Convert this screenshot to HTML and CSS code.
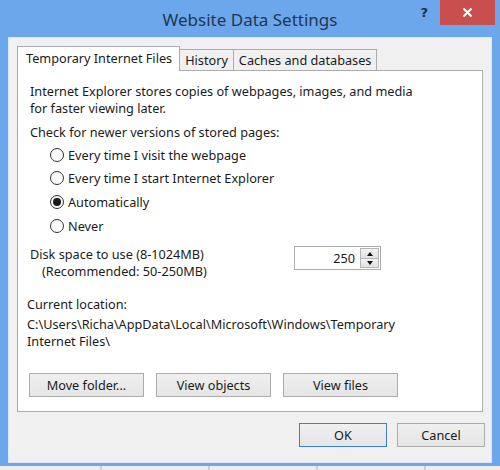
FILE: index.html
```html
<!DOCTYPE html>
<html>
  <head>
    <title>Website Data Settings</title>
    <meta http-equiv="Content-Type" content="text/html; charset=UTF-8">
    <link rel="stylesheet" href="styles.css">
  </head>

  <body>
    <div class="window">
      <div class="titleBar">
        <span></span>
        <span class="caption">Website Data Settings</span>
        <div class="captionButtons">
          <span class="helpBtn">?</span>
          <span class="closeBtn">
            <svg width="11" height="11" viewBox="0 0 11 11">
              <path d="M1.5 1.5 L9.5 9.5 M9.5 1.5 L1.5 9.5" stroke="#fff" stroke-width="2" fill="none"/>
            </svg>
          </span>
        </div>
      </div>

      <div class="client">
        <div class="tabStrip">
          <div class="tab selected">Temporary Internet Files</div>
          <div class="tab">History</div>
          <div class="tab">Caches and databases</div>
        </div>

        <div class="tabPage">
          <div class="indent intro">
            Internet Explorer stores copies of webpages, images, and media<br>
            for faster viewing later.
          </div>
          <div class="indent checkLabel">Check for newer versions of stored pages:</div>

          <div class="radioGroup">
            <div class="radioRow"><span class="radio"></span>Every time I visit the webpage</div>
            <div class="radioRow"><span class="radio"></span>Every time I start Internet Explorer</div>
            <div class="radioRow"><span class="radio checked"></span>Automatically</div>
            <div class="radioRow"><span class="radio"></span>Never</div>
          </div>

          <div class="diskRow">
            <div class="indent diskLabel">
              Disk space to use (8-1024MB)<br>
              <span class="recommended">(Recommended: 50-250MB)</span>
            </div>
            <div class="spinBox">
              <span class="spinValue">250</span>
              <span class="spinButtons">
                <span class="spinBtn"><span class="arrowUp"></span></span>
                <span class="spinBtn"><span class="arrowDown"></span></span>
              </span>
            </div>
          </div>

          <div class="locLabel">Current location:</div>
          <div class="locPath">
            C:\Users\Richa\AppData\Local\Microsoft\Windows\Temporary<br>
            Internet Files\
          </div>

          <div class="pageButtons">
            <span class="button">Move folder...</span>
            <span class="button">View objects</span>
            <span class="button">View files</span>
          </div>
        </div>

        <div class="dialogButtons">
          <span class="button dlg default">OK</span>
          <span class="button dlg">Cancel</span>
        </div>
      </div>

      <div class="taskStrip">
        <span class="seg"></span>
        <span class="seg"></span>
        <span class="seg"></span>
        <span class="seg"></span>
      </div>
    </div>
  </body>
</html>
```

FILE: styles.css
```css
body {
  margin: 0;
  font-family: "Noto Sans", "Open Sans", sans-serif;
  font-size: 12.7px;
  color: #1b1b1b;
}
.window {
  width: 500px;
  height: 470px;
  background-color: #6ca7ec;
  display: flex;
  flex-direction: column;
  overflow: hidden;
}

/* title bar */
.titleBar {
  height: 37px;
  display: grid;
  grid-template-columns: 1fr auto 1fr;
}
.caption {
  font-size: 17px;
  color: #1f3654;
  line-height: 37px;
  padding-top: 1px;
}
.captionButtons {
  display: flex;
  justify-content: flex-end;
  align-items: flex-start;
}
.helpBtn {
  font-family: "DejaVu Sans", sans-serif;
  font-weight: bold;
  font-size: 13px;
  color: #1b2e4a;
  margin-top: 5px;
  margin-right: 12px;
}
.closeBtn {
  width: 55px;
  height: 25px;
  margin-right: 5px;
  background-color: #c84f4e;
  display: flex;
  align-items: center;
  justify-content: center;
}

/* client area */
.client {
  margin: 0 8px;
  border: 1px solid #dce8f7;
  background-color: #f0f0f0;
  padding: 9px 8px 15px 8px;
}
.tabStrip {
  display: flex;
  align-items: flex-end;
  height: 23px;
}
.tab {
  height: 20px;
  line-height: 20px;
  padding: 0 5px;
  border: 1px solid #acacac;
  border-bottom: 0;
  background-color: #f0f0f0;
}
.tab + .tab { border-left: 0; }
.tab.selected {
  height: 24px;
  line-height: 22px;
  padding: 0 7px 0 8px;
  background-color: #fff;
  margin-bottom: -1px;
  position: relative;
  z-index: 1;
}
.tabPage {
  background-color: #fff;
  border: 1px solid #acacac;
  padding: 12px 9px 14px 9px;
}
.indent { padding-left: 3px; }
.intro { line-height: 17px; }
.checkLabel {
  margin-top: 7px;
  line-height: 17px;
}

/* radio buttons */
.radioGroup {
  margin-top: 2px;
  padding-left: 23px;
}
.radioRow {
  height: 23.6px;
  display: flex;
  align-items: center;
}
.radio {
  width: 14px;
  height: 14px;
  border: 1px solid #333;
  border-radius: 50%;
  background: linear-gradient(#f4f4f4, #fff);
  margin-right: 4px;
  display: inline-flex;
  align-items: center;
  justify-content: center;
  box-sizing: border-box;
}
.radio.checked::after {
  content: "";
  width: 8px;
  height: 8px;
  border-radius: 50%;
  background-color: #1b1b1b;
}

/* disk space */
.diskRow {
  margin-top: 9px;
  display: grid;
  grid-template-columns: 267px 87px;
  align-items: start;
}
.diskLabel { line-height: 17px; }
.recommended { padding-left: 12px; }
.spinBox {
  height: 24px;
  border: 1px solid #abadb3;
  box-sizing: border-box;
  background-color: #fff;
  display: flex;
  align-items: center;
  justify-content: flex-end;
}
.spinValue { padding-right: 5px; }
.spinButtons {
  display: flex;
  flex-direction: column;
  width: 19px;
  height: 20px;
  margin-right: 1px;
}
.spinBtn {
  flex: 1;
  background: linear-gradient(#f2f2f2, #e2e2e2);
  border: 1px solid #b5b5b5;
  display: flex;
  align-items: center;
  justify-content: center;
}
.spinBtn + .spinBtn { border-top: 0; }
.arrowUp, .arrowDown {
  width: 0;
  height: 0;
  border-left: 3px solid transparent;
  border-right: 3px solid transparent;
}
.arrowUp { border-bottom: 4px solid #111; }
.arrowDown { border-top: 4px solid #111; }

/* current location */
.locLabel {
  margin-top: 16px;
  line-height: 17px;
}
.locPath {
  margin-top: 3px;
  line-height: 17px;
}

/* buttons */
.pageButtons {
  margin-top: 23px;
  margin-left: 2px;
  display: flex;
  gap: 12px;
}
.button {
  width: 115px;
  height: 24px;
  box-sizing: border-box;
  border: 1px solid #acacac;
  background: linear-gradient(#f0f0f0, #e5e5e5);
  display: flex;
  align-items: center;
  justify-content: center;
}
.dialogButtons {
  margin-top: 11px;
  margin-right: -2px;
  display: flex;
  justify-content: flex-end;
  gap: 10px;
}
.button.dlg { width: 88px; }
.button.default {
  border-color: #3c7fd1;
}

/* strip below the dialog frame */
.taskStrip {
  margin-top: auto;
  height: 4px;
  background-color: #eeeeee;
  display: flex;
}
.seg {
  width: 100px;
  border-right: 2px solid #cfcfcf;
  margin-right: 6px;
}
```
